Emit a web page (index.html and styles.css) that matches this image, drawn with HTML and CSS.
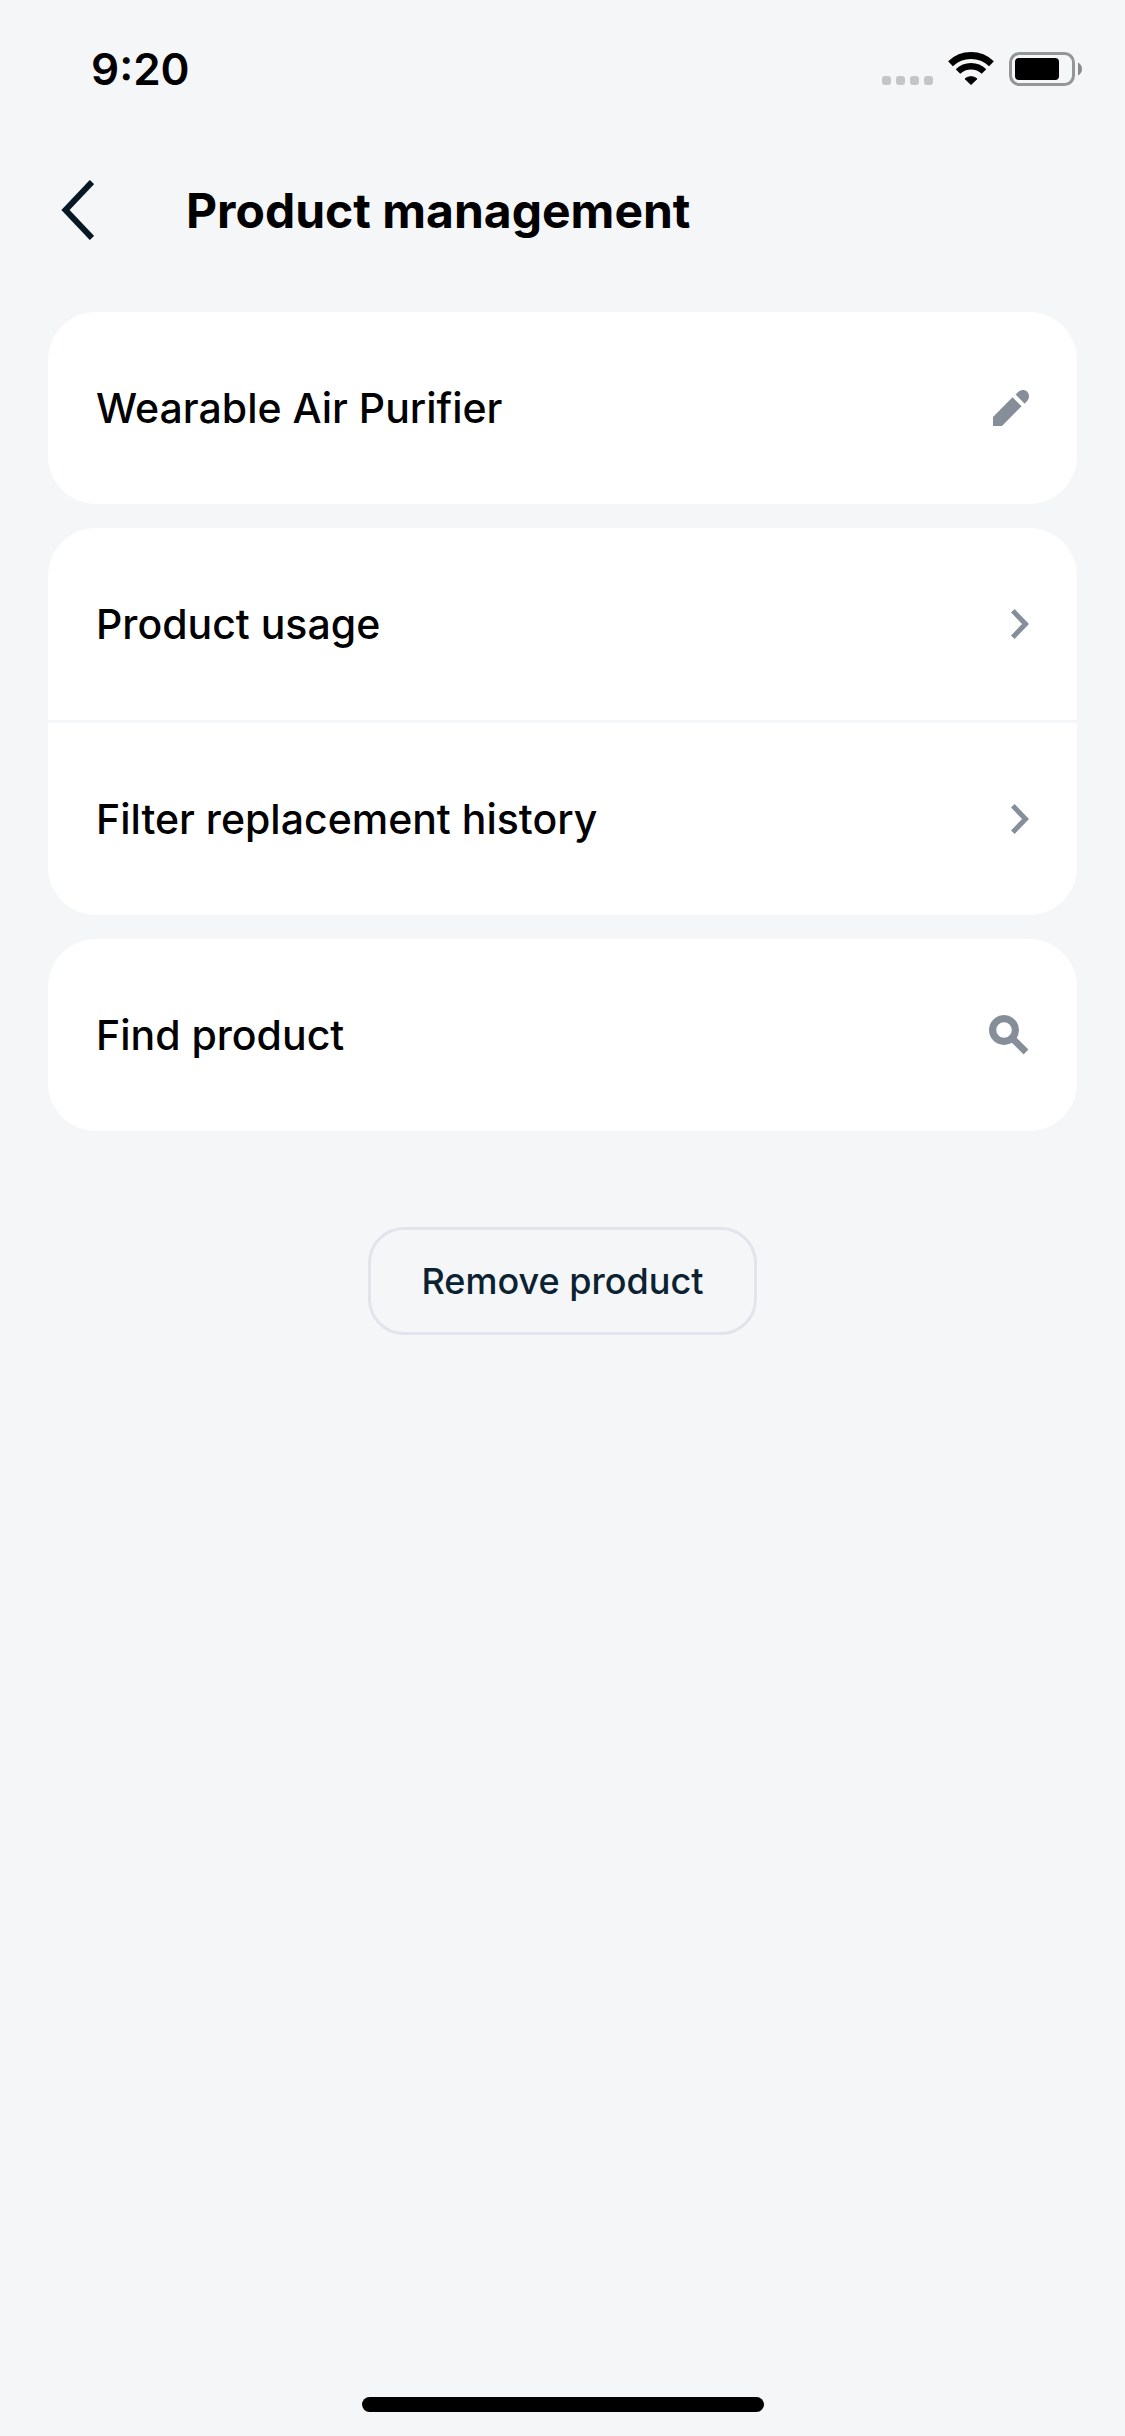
FILE: index.html
```
<!DOCTYPE html>
<html lang="en">
<head>
    <meta charset="UTF-8">
    <meta name="viewport" content="width=device-width, initial-scale=1.0">
    <title>Product management</title>
    <link rel="stylesheet" href="styles.css">
</head>
<body>
    <div class="status-bar">
        <span class="time">9:20</span>
        <div class="status-icons">
            <!-- No signal -->
            <svg width="51" height="34" viewBox="0 0 51 34" fill="#c4c5c7">
                <rect x="0" y="24" width="9" height="9" rx="3"/>
                <rect x="14" y="24" width="9" height="9" rx="3"/>
                <rect x="28" y="24" width="9" height="9" rx="3"/>
                <rect x="42" y="24" width="9" height="9" rx="3"/>
            </svg>
            <!-- Wi-Fi -->
            <svg width="46" height="34" viewBox="0 0 46 34" fill="none" stroke="#000">
                <path d="M2.500 11.800A29.500 29.500 0 0 1 43.500 11.800" stroke-width="6.800"/>
                <path d="M10 19.500A18.750 18.750 0 0 1 36 19.500" stroke-width="6.500"/>
                <path d="M17 26.800A9.500 9.500 0 0 1 29 26.800L23 32.500Z" fill="#000" stroke-width="1" stroke-linejoin="round"/>
            </svg>
            <!-- Battery -->
            <svg width="73" height="34" viewBox="0 0 73 34">
                <rect x="1.500" y="1.500" width="63" height="31" rx="9" fill="none" stroke="#959698" stroke-width="3"/>
                <rect x="6" y="6" width="44" height="22" rx="4" fill="#000"/>
                <path d="M69 10.500C74.300 13 74.300 21 69 23.500Z" fill="#88898b"/>
            </svg>
        </div>
    </div>

    <header class="header">
        <button class="back" type="button" aria-label="Back">
            <svg width="34" height="60" viewBox="0 0 34 60" fill="none" stroke="#071825" stroke-width="6">
                <path d="M32 2L5.500 30L32 58"/>
            </svg>
        </button>
        <h1>Product management</h1>
    </header>

    <main>
        <div class="card">
            <button class="row" type="button">
                Wearable Air Purifier
                <svg width="36" height="36" viewBox="0 0 36 36" fill="#868e99">
                    <path d="M0 27L19.500 7.200L28.500 16.300L9 36H0Z"/>
                    <path d="M22.700 4.600L25 2.200C28 -0.800 32 -0.600 34.200 1.800C36.600 4.300 36.500 8 34.300 10.800L31.700 13.700Z"/>
                </svg>
            </button>
        </div>

        <div class="card">
            <a class="row" href="#usage">
                Product usage
                <svg width="18" height="30" viewBox="0 0 18 30" fill="none" stroke="#868e99" stroke-width="5">
                    <path d="M1.800 1.800L14.500 15L1.800 28.200"/>
                </svg>
            </a>
            <a class="row" href="#filter-history">
                Filter replacement history
                <svg width="18" height="30" viewBox="0 0 18 30" fill="none" stroke="#868e99" stroke-width="5">
                    <path d="M1.800 1.800L14.500 15L1.800 28.200"/>
                </svg>
            </a>
        </div>

        <div class="card">
            <a class="row" href="#find">
                Find product
                <svg width="40" height="40" viewBox="0 0 40 40" fill="none" stroke="#868e99">
                    <circle cx="15" cy="15" r="11.400" stroke-width="7.200"/>
                    <path d="M22.500 22.500L37 37" stroke-width="6.800"/>
                </svg>
            </a>
        </div>

        <button class="remove" type="button">Remove product</button>
    </main>

    <div class="home-indicator"></div>
</body>
</html>
```
FILE: styles.css
```
* {
    box-sizing: border-box;
}

body {
    display: flex;
    flex-direction: column;
    min-height: 100vh;
    margin: 0;
    padding-bottom: 24px;
    background-color: #f5f6f8;
    color: #000;
    font-family: Inter, sans-serif;
}

svg {
    display: block;
    flex-shrink: 0;
}

button {
    background: none;
    border: none;
    cursor: pointer;
}

/* Status bar */
.status-bar {
    display: flex;
    justify-content: space-between;
    align-items: center;
    height: 138px;
    padding: 0 43px 0 91px;
}

.time {
    font-size: 44px;
    font-weight: 600;
}

.status-icons {
    display: flex;
    gap: 15px;
}

/* Header */
.header {
    display: flex;
    align-items: center;
    gap: 92px;
    height: 144px;
    padding: 0 48px;
}

.back {
    padding: 0 0 0 12px;
}

h1 {
    margin: 0;
    font-size: 48px;
    font-weight: 700;
}

/* Cards */
main {
    display: flex;
    flex-direction: column;
    flex: 1;
    gap: 24px;
    padding: 30px 48px;
}

.card {
    background-color: #fff;
    border-radius: 48px;
    overflow: hidden;
}

.row {
    display: flex;
    justify-content: space-between;
    align-items: center;
    width: 100%;
    height: 192px;
    padding: 0 48px;
    color: #000;
    font-family: inherit;
    font-size: 41px;
    font-weight: 500;
    text-align: left;
    text-decoration: none;
}

.row + .row {
    height: 195px;
    border-top: 3px solid #f5f6f8;
}

.remove {
    align-self: center;
    height: 108px;
    margin-top: 72px;
    padding: 0 51px;
    border: 3px solid #e3e4eb;
    border-radius: 36px;
    color: #0a2231;
    font-family: inherit;
    font-size: 36px;
    font-weight: 500;
}

.home-indicator {
    align-self: center;
    width: 402px;
    height: 15px;
    border-radius: 8px;
    background-color: #000;
}
```
